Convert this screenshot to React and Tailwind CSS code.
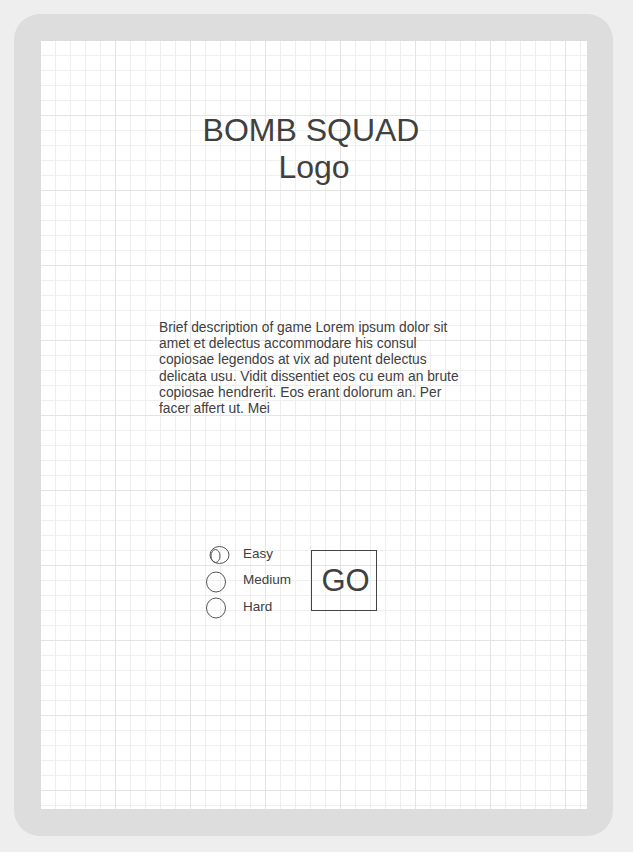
import React from "react";

function Radio({ checked }) {
  return (
    <svg width="24" height="22" viewBox="0 0 24 22" className="shrink-0 overflow-visible">
      {checked ? (
        <>
          <ellipse cx="13.5" cy="11" rx="9.5" ry="8.5" fill="none" stroke="#555" strokeWidth="1" />
          <ellipse cx="9.5" cy="12" rx="4.5" ry="6.5" fill="none" stroke="#555" strokeWidth="1" />
        </>
      ) : (
        <ellipse cx="10" cy="11" rx="9.5" ry="10" fill="none" stroke="#555" strokeWidth="1" />
      )}
    </svg>
  );
}

export default function App() {
  const levels = [
    { label: "Easy", checked: true },
    { label: "Medium" },
    { label: "Hard" },
  ];

  return (
    <div className="w-[633px] h-[852px] bg-[#eeeeee] pt-[14px] pl-[14px] font-['Liberation_Sans',Arial,sans-serif] text-[#404040]">
      {/* ── Device bezel ── */}
      <div className="w-[599px] h-[822px] rounded-[26px] bg-[#dddddd] pt-[27px] pl-[27px]">
        {/* ── Screen with grid paper ── */}
        <div className="w-[546px] h-[768px] bg-white bg-[linear-gradient(#e4e4e4_1px,transparent_1px),linear-gradient(90deg,#e4e4e4_1px,transparent_1px),linear-gradient(#efefef_1px,transparent_1px),linear-gradient(90deg,#efefef_1px,transparent_1px)] bg-[size:75px_75px,75px_75px,15px_15px,15px_15px] bg-[position:-1px_-1px] flex flex-col">
          {/* Title */}
          <div className="mt-[71px] text-center text-[32px] leading-[37px]">
            <p className="pr-[6px]">BOMB SQUAD</p>
            <p>Logo</p>
          </div>

          {/* Description */}
          <p className="mt-[134px] ml-[118px] w-[305px] text-[13.8px] leading-[16.2px]">
            Brief description of game Lorem ipsum dolor sit amet et delectus accommodare his consul copiosae legendos at vix ad putent delectus delicata usu. Vidit dissentiet eos cu eum an brute copiosae hendrerit. Eos erant dolorum an. Per facer affert ut. Mei
          </p>

          {/* Difficulty + GO */}
          <div className="mt-[128px] ml-[165px] flex items-start">
            <div className="flex flex-col -mt-[3px]">
              {levels.map((l) => (
                <div key={l.label} className="flex items-center h-[26.5px]">
                  <Radio checked={l.checked} />
                  <span className="ml-[13px] text-[13.5px] leading-[16px] -mt-[3px]">{l.label}</span>
                </div>
              ))}
            </div>
            <button className="ml-[20px] mt-[5px] w-[66px] h-[61px] border border-[#444] flex items-center justify-center pl-[3px] text-[31px] leading-none text-[#404040]">
              GO
            </button>
          </div>
        </div>
      </div>
    </div>
  );
}
